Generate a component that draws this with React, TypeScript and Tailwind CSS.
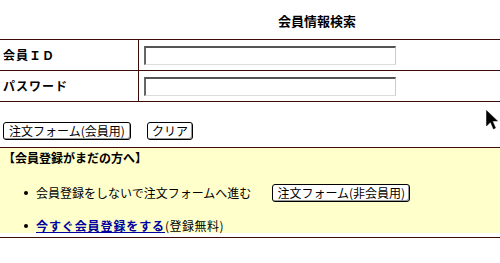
export default function App() {
  const line = "border-[#3d0a0a]";
  return (
    <div className="relative w-[500px] h-[263px] bg-white overflow-hidden text-black font-['Noto_Sans_CJK_JP',sans-serif] text-[12px] leading-[14px]">
      <div className="h-[39px] flex items-center pl-[278px] pt-[2px] text-[13px] font-bold tracking-[0px]">
        会員情報検索
      </div>
      <div className={`border-t ${line}`}>
        <div className={`flex h-[31px] border-b ${line}`}>
          <div className={`w-[139px] border-r ${line} flex items-center pl-[3px] font-bold tracking-[1px]`}>
            会員ＩＤ
          </div>
          <div className="flex items-center pl-[5px]">
            <div className="w-[252px] h-[19px] bg-white border-t-2 border-l-2 border-t-[#555] border-l-[#666] border-r border-b border-r-[#ccc] border-b-[#ddd]" />
          </div>
        </div>
        <div className={`flex h-[31px] border-b ${line}`}>
          <div className={`w-[139px] border-r ${line} flex items-center pl-[3px] font-bold tracking-[1px]`}>
            パスワード
          </div>
          <div className="flex items-center pl-[5px]">
            <div className="w-[252px] h-[19px] bg-white border-t-2 border-l-2 border-t-[#555] border-l-[#666] border-r border-b border-r-[#ccc] border-b-[#ddd]" />
          </div>
        </div>
      </div>
      <div className="flex items-center mt-[20px] pl-[3px] h-[18px]">
        <div className="w-[128px] h-[18px] flex items-center justify-center border border-black rounded-[3px] bg-white shadow-[inset_-1px_-1px_0_#999]">
          注文フォーム(会員用)
        </div>
        <div className="ml-[16px] w-[46px] h-[18px] flex items-center justify-center border border-black rounded-[3px] bg-white shadow-[inset_-1px_-1px_0_#999]">
          クリア
        </div>
      </div>
      <div className={`mt-[7px] border-t ${line}`}>
        <div className="bg-[#ffffcc] h-[85px] flex flex-col">
          <div className="mt-[2px] h-[16px] flex items-center pl-[3px] font-bold">
            【会員登録がまだの方へ】
          </div>
          <div className="mt-[18px] h-[18px] flex items-center">
            <div className="ml-[24px] w-[4px] h-[4px] rounded-full bg-black" />
            <div className="ml-[8px]">会員登録をしないで注文フォームへ進む</div>
            <div className="ml-[21px] w-[138px] h-[18px] flex items-center justify-center border border-black rounded-[3px] bg-white shadow-[inset_-1px_-1px_0_#999]">
              注文フォーム(非会員用)
            </div>
          </div>
          <div className="mt-[17px] h-[14px] flex items-center">
            <div className="ml-[24px] w-[4px] h-[4px] rounded-full bg-black" />
            <span className="ml-[8px] font-bold text-[#0000a0] underline tracking-[0.9px]">今すぐ会員登録をする</span>
            <span className="tracking-[0.5px]">(登録無料)</span>
          </div>
        </div>
        <div className={`mt-[4px] border-t ${line}`} />
      </div>
      <svg className="absolute left-[486px] top-[110px]" width="12" height="20" viewBox="0 0 12 20">
        <path d="M0.5 0.5 L0.5 16 L4.5 12 L7.5 19 L9.5 18 L6.5 11 L11.5 11 Z" fill="#000" stroke="#000" strokeWidth="0.5" />
      </svg>
    </div>
  );
}
